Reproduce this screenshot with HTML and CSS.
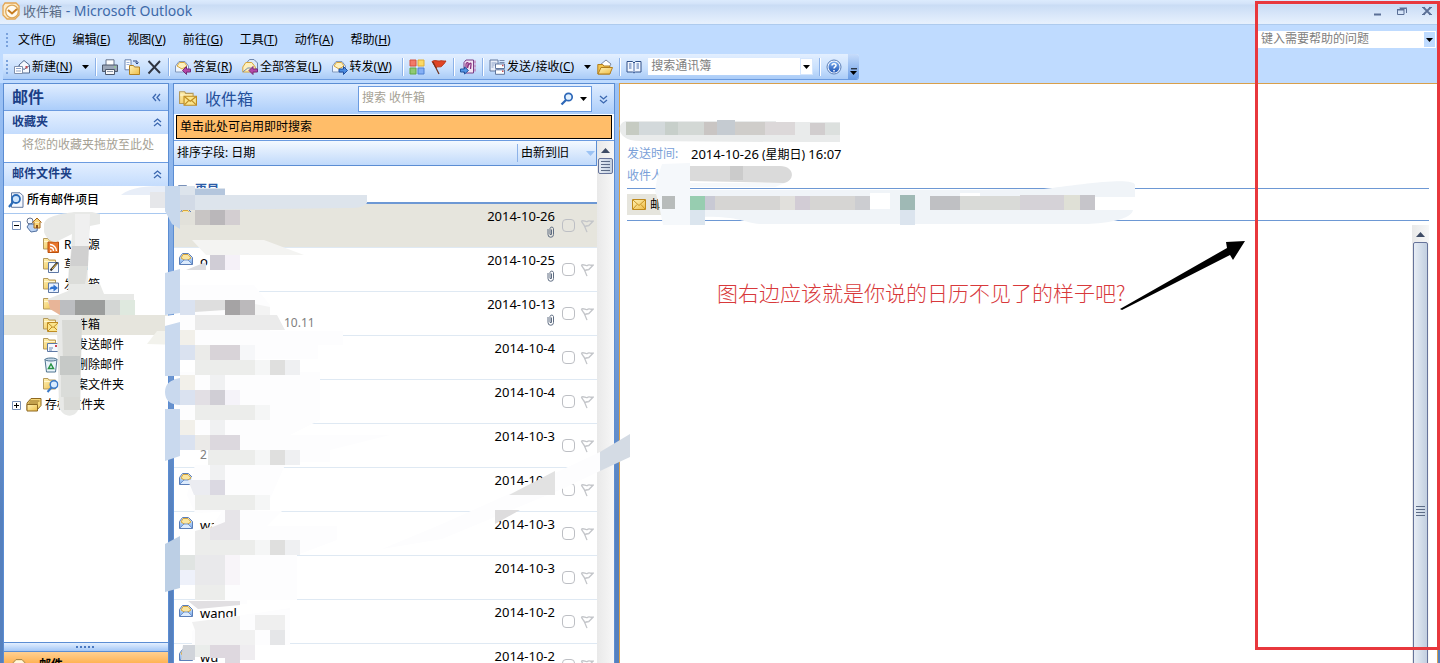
FILE: index.html
```html
<!DOCTYPE html>
<html lang="zh-CN">
<head>
<meta charset="utf-8">
<title>收件箱 - Microsoft Outlook</title>
<link rel="stylesheet" href="styles.css">
</head>
<body>
<svg class="defs" aria-hidden="true">
  <defs>
    <linearGradient id="gold" x1="0" y1="0" x2="1" y2="1"><stop offset="0" stop-color="#fff3b8"/><stop offset="1" stop-color="#eebc45"/></linearGradient>
    <linearGradient id="sky" x1="0" y1="0" x2="0" y2="1"><stop offset="0" stop-color="#f4f9ff"/><stop offset="1" stop-color="#6fa4e8"/></linearGradient>
    <linearGradient id="blueball" x1="0" y1="0" x2="0" y2="1"><stop offset="0" stop-color="#7fb0f0"/><stop offset="1" stop-color="#1f55b5"/></linearGradient>
  </defs>
  <symbol id="folder" viewBox="0 0 16 16"><path d="M.5 1.500h4.500l1 1.500h6.500v9H.5z" fill="url(#gold)" stroke="#b59a5c"/><path d="M1 4.500h11" stroke="#fff6cf"/></symbol>
  <symbol id="open-mail" viewBox="0 0 16 16"><path d="M1.500 6.500L4.500 2.500h6l4 4v7h-13z" fill="url(#sky)" stroke="#5c7fb8"/><path d="M3 7l2-3.500h5L13 7 8 10z" fill="#fbe6a0" stroke="#d7a63c"/><path d="M2 13l4-4h4l4 4" fill="#dcebfd" stroke="#7396cc"/></symbol>
  <symbol id="reply" viewBox="0 0 16 16"><path d="M.5 7L4 2.500h6L13.500 7v6H.5z" fill="#eef5fe" stroke="#8197bb"/><path d="M2 7l2.500-3.500h5L12 7 7 10z" fill="#fdf0bd" stroke="#d7a63c"/><path d="M7.500 11.500l4-4V10h4v3h-4v2.500z" fill="#b548a8" stroke="#762a78"/></symbol>
  <symbol id="flag" viewBox="0 0 16 16"><path d="M1.500 2.500c3-2 5 2 7.500 0 2-1 3 .5 6 0l-5 5-4 1M1.500 2.500l3 4.500 1 1.500 3-1M4.500 6.500L8 15" fill="none" stroke="#c3c5c9" stroke-width="1.500"/></symbol>
  <symbol id="clip" viewBox="0 0 8 12"><path d="M1 3v5.500a2.500 2.500 0 005.500 0V2.500a1.800 1.800 0 00-3.500 0v6h1.500V3.500" fill="none" stroke="#5f6d82"/></symbol>
  <symbol id="chev-up" viewBox="0 0 9 9"><path d="M1 4l3.500-3L8 4M1 8l3.500-3L8 8" fill="none" stroke="#3c68b0" stroke-width="1.300"/></symbol>
  <symbol id="caret" viewBox="0 0 7 4"><path d="M0 0h7L3.500 4z" fill="currentColor"/></symbol>
  <symbol id="env" viewBox="0 0 16 16"><path d="M1.500 2.500h13v10h-13z" fill="url(#gold)" stroke="#c08a1c"/><path d="M2 3l6 5.500L14 3M2 12l4-4.500M14 12l-4-4.500" fill="none" stroke="#c99425"/></symbol>
</svg>

<header class="titlebar">
  <svg class="logo" viewBox="0 0 18 18"><path d="M3 1h11l3 3v9l-4 4H5l-4-4V4z" fill="#fdebc8" stroke="#e3a552" stroke-width="1.300"/><circle cx="10" cy="9.500" r="6.300" fill="#fffaf0" stroke="#dba75a" stroke-width="1.300"/><path d="M6 8l4 3.500L15 7" fill="none" stroke="#c67d22" stroke-width="2"/></svg>
  <h1><span>收件箱</span> - Microsoft Outlook</h1>
  <div class="winbtns">
    <button aria-label="最小化"><svg viewBox="0 0 10 10"><path d="M2 8.500h7" stroke="#5a6f96" stroke-width="2"/></svg></button>
    <button aria-label="还原"><svg viewBox="0 0 10 10"><path d="M.5 4h6.500v4.500H.5zM3 2.500h6.500V7" fill="none" stroke="#5a6f96"/><path d="M0 3.500h7.500M2.500 2h7.500" stroke="#5a6f96"/></svg></button>
    <button aria-label="关闭"><svg viewBox="0 0 10 10"><path d="M1.500 1.500l7 7M8.500 1.500l-7 7" stroke="#5a6f96" stroke-width="1.800"/><path d="M0 1.500h3M7 1.500h3M0 8.500h3M7 8.500h3" stroke="#5a6f96"/></svg></button>
  </div>
</header>

<nav class="menubar">
  <span class="grip"></span>
  <button>文件(<u>F</u>)</button><button>编辑(<u>E</u>)</button><button>视图(<u>V</u>)</button><button>前往(<u>G</u>)</button><button>工具(<u>T</u>)</button><button>动作(<u>A</u>)</button><button>帮助(<u>H</u>)</button>
  <div class="askbox"><input type="text" aria-label="帮助" placeholder="键入需要帮助的问题"><button aria-label="展开"><svg class="caret"><use href="#caret"/></svg></button></div>
</nav>

<div class="toolrow">
<div class="toolbar">
  <span class="grip"></span>
  <button class="tb text"><svg class="ico" viewBox="0 0 16 16"><path d="M5 6l5-4.500L15.500 6v8H5z" fill="#f5f9ff" stroke="#51698f"/><path d="M5 6.500l5 4 5.500-4" fill="none" stroke="#51698f"/><path d="M.5 7.500h8v7h-8z" fill="#fff" stroke="#8090ac"/><path d="M2 9.500h5M2 12h5" stroke="#8fa5cc"/><path d="M11.500 7h2v2.500h-2z" fill="#c64f52"/></svg>新建(<u>N</u>)</button>
  <button class="tb drop" aria-label="新建选项"><svg class="caret"><use href="#caret"/></svg></button>
  <span class="sep"></span>
  <button class="tb" aria-label="打印"><svg class="ico" viewBox="0 0 16 16"><path d="M4 6V.8h8V6" fill="#fff" stroke="#66748c"/><path d="M.5 6h15v6.500H.5z" fill="#9ca7b8" stroke="#4d596d"/><path d="M3.500 10.500h9v5h-9z" fill="#f8f8f8" stroke="#4d596d"/><path d="M5 12.500h6" stroke="#8d97a8"/><path d="M12 8h2" stroke="#8fe07a"/></svg></button>
  <button class="tb" aria-label="移动"><svg class="ico" viewBox="0 0 16 16"><path d="M1 .8h6v10H1z" fill="#fff" stroke="#6a83ad"/><path d="M2.500 3.500h3M2.500 5.500h3" stroke="#9db2d6"/><path d="M9 2h4v3M11.500 3.500L13 5l1.500-1.500" fill="none" stroke="#2c4780"/><path d="M5.500 6.500h4l1 1.500h5v7.500h-10z" fill="url(#gold)" stroke="#b08023"/></svg></button>
  <button class="tb" aria-label="删除"><svg class="ico" viewBox="0 0 16 16"><path d="M2.500 2l11.500 12M14 2L2.500 14.500" stroke="#2f3440" stroke-width="1.900"/></svg></button>
  <span class="sep"></span>
  <button class="tb text"><svg class="ico"><use href="#reply"/></svg>答复(<u>R</u>)</button>
  <button class="tb text"><svg class="ico" viewBox="0 0 16 16"><path d="M4.500 4l3-3.500H12L15.500 4v6h-11z" fill="#dce9fa" stroke="#6e87ae"/><path d="M.8 8l3-4.500h6l3.500 4.500v5H.8z" fill="#fdf0bd" stroke="#d7a63c"/><path d="M.8 13l5-4h3" fill="none" stroke="#6e87ae"/><path d="M7 11.500l4-4V10h4.500v3H11v2.500z" fill="#b548a8" stroke="#762a78"/></svg>全部答复(<u>L</u>)</button>
  <button class="tb text"><svg class="ico" viewBox="0 0 16 16"><path d="M.5 7L4 2.500h6L13.500 7v6H.5z" fill="#eef5fe" stroke="#8197bb"/><path d="M2 7l2.500-3.500h5L12 7 7 10z" fill="#fdf0bd" stroke="#d7a63c"/><path d="M15.500 11.500l-4-4V10H7v3h4.500v2.500z" fill="#4d8ce0" stroke="#1f4fa0"/></svg>转发(<u>W</u>)</button>
  <span class="sep"></span>
  <button class="tb" aria-label="分类"><svg class="ico" viewBox="0 0 16 16"><path d="M1 1h6v6H1z" fill="#f27a68" stroke="#d4503f"/><path d="M9 1h6v6H9z" fill="#fbd966" stroke="#dfae35"/><path d="M1 9h6v6H1z" fill="#8fca72" stroke="#62a845"/><path d="M9 9h6v6H9z" fill="#84aff5" stroke="#4f80d3"/></svg></button>
  <button class="tb" aria-label="后续标志"><svg class="ico" viewBox="0 0 16 16"><path d="M1 2.500c3-2 5 0 8-.5 2-1 3 .5 6 0-2 3-3 4-4 5-2 2-4-.5-6 2z" fill="#e04424" stroke="#b8381d"/><path d="M2 3l6 12" stroke="#71331d" stroke-width="1.300"/></svg></button>
  <span class="sep"></span>
  <button class="tb" aria-label="发送到 OneNote"><svg class="ico" viewBox="0 0 16 16"><path d="M4 3.500L6 1h7.500v13H4z" fill="#f3e4f3" stroke="#7b3f87"/><path d="M6 10V5.500c0-2.500 3-2.500 2 0L7.500 9c1-5 4-6 3.500-3.500L10.500 10" fill="none" stroke="#8a2f80" stroke-width="1.300"/><path d="M15 1.500v12" stroke="#c05a9c" stroke-dasharray="3 1"/><path d="M.5 10h4V8l4 3.500-4 3.500v-2h-4z" fill="#5596e6" stroke="#23569f"/></svg></button>
  <span class="sep"></span>
  <button class="tb text"><svg class="ico" viewBox="0 0 16 16"><path d="M1 1h8v11H1z" fill="#e9eef8" stroke="#63789f"/><path d="M2.500 4h5M2.500 6h3M2.500 8h2" stroke="#8ba0c6"/><path d="M10.500 1.500h5M10.500 3.500h5" stroke="#7a8cae"/><path d="M6.500 5h9v4.500h-9zM6.500 10.800h9v4.500h-9z" fill="#fff" stroke="#61779e"/><path d="M13 6.500h1.500M13 12.300h1.500" stroke="#c64f52" stroke-width="1.500"/></svg>发送/接收(<u>C</u>)</button>
  <button class="tb drop" aria-label="发送接收选项"><svg class="caret"><use href="#caret"/></svg></button>
  <button class="tb" aria-label="查找"><svg class="ico" viewBox="0 0 16 16"><path d="M3 6l6-5 5 4-3 5z" fill="#fff" stroke="#7d8aa2"/><path d="M.8 5.500h5l1 1.500h6v8H.8z" fill="#f3c54e" stroke="#b27e1e"/><path d="M1 15l3-6.500h11.500L12.800 15z" fill="url(#gold)" stroke="#b27e1e"/></svg></button>
  <span class="sep"></span>
  <button class="tb" aria-label="通讯簿"><svg class="ico" viewBox="0 0 16 16"><path d="M1 2.500h5.500L8 4l1.500-1.500H15v10.500H9.500L8 14l-1.500-1H1z" fill="#f2f7ff" stroke="#2f4f88"/><path d="M8 4v10M3 5h2.500M3 7h2.500M3 9h2.500M10.500 5H13M10.500 7H13M10.500 9H13" stroke="#4c6fae"/></svg></button>
  <div class="finder"><input type="text" aria-label="搜索通讯簿" placeholder="搜索通讯簿"><button aria-label="展开"><svg class="caret"><use href="#caret"/></svg></button></div>
  <span class="sep"></span>
  <button class="tb" aria-label="帮助"><svg class="ico" viewBox="0 0 16 16"><circle cx="8" cy="8" r="7" fill="#f2f7ff" stroke="#5b7fb8"/><circle cx="8" cy="8" r="5.500" fill="url(#blueball)"/><path d="M6 6.500c0-2.500 4-2.500 4 0 0 1.500-2 1.300-2 3M8 11v1.500" fill="none" stroke="#fff" stroke-width="1.500"/></svg></button>
  <button class="overflow" aria-label="工具栏选项"><svg viewBox="0 0 7 8"><path d="M1 .8h6" stroke="#000"/><path d="M0 3h7L3.500 7z"/></svg></button>
</div>
</div>

<main class="panes">
  <aside class="nav">
    <div class="nav-title"><h2>邮件</h2><button aria-label="折叠"><svg class="chev" viewBox="0 0 9 9"><path d="M4 1L1 4.500 4 8M8 1L5 4.500 8 8" fill="none" stroke="#3c68b0" stroke-width="1.300"/></svg></button></div>
    <div class="nav-sec"><h3>收藏夹</h3><button aria-label="折叠"><svg class="chev"><use href="#chev-up"/></svg></button></div>
    <p class="fav">将您的收藏夹拖放至此处</p>
    <div class="nav-sec line"><h3>邮件文件夹</h3><button aria-label="折叠"><svg class="chev"><use href="#chev-up"/></svg></button></div>
    <button class="all"><svg class="ico" viewBox="0 0 16 16"><path d="M3.500.8H12l3 3v11.500H3.500z" fill="#f4f8ff" stroke="#60779f"/><circle cx="8" cy="7" r="4" fill="#cfe5fb" stroke="#2c6cb8" stroke-width="1.800"/><path d="M5 10l-4 5" stroke="#2c6cb8" stroke-width="2.200"/></svg>所有邮件项目</button>
    <ul class="tree">
      <li class="root"><svg class="tog" viewBox="0 0 9 9"><path d="M.5.5h8v8h-8z" fill="#fff" stroke="#7890b8"/><path d="M2 4.500h5" stroke="#000"/></svg><svg class="ico" viewBox="0 0 16 16"><circle cx="4" cy="4" r="3" fill="#f5f8ff" stroke="#62728e"/><path d="M3 7h9l-1 7-6 1-4-5z" fill="#bcd3f3" stroke="#51709f"/><path d="M6.500 5.500L11 1l4.500 4.500M8 5v6h6V5" fill="#f8d476" stroke="#a8681c"/><path d="M10 8h2v3h-2z" fill="#8c4f18"/></svg></li>
      <li><svg class="ico" viewBox="0 0 16 16"><use href="#folder"/><path d="M5 5h10.500v10.500H5z" fill="#e8762c" stroke="#b9510f"/><path d="M7 14h1.500M7 10.500c2 0 3.500 1.500 3.500 3.500M7 7.500c3.500 0 6.500 3 6.500 6.500" fill="none" stroke="#fff" stroke-width="1.400"/></svg>RSS 源</li>
      <li><svg class="ico" viewBox="0 0 16 16"><use href="#folder"/><path d="M5.500 5.500h10v10h-10z" fill="#f6faff" stroke="#5d78a5"/><path d="M7.500 13.500l7-8" stroke="#333" stroke-width="2"/><path d="M9 12l5-5.500" stroke="#f3bf45"/></svg>草稿</li>
      <li><svg class="ico" viewBox="0 0 16 16"><use href="#folder"/><path d="M5.500 6h10v9.500h-10z" fill="#e8f1ff" stroke="#5d78a5"/><path d="M6.500 13c0-3 2-3.500 4-3.500V7.500L15 11l-4.500 3.500V12c-2 0-3 0-4 1z" fill="#2f72cf"/></svg>发件箱</li>
      <li><svg class="ico"><use href="#folder"/></svg></li>
      <li class="sel"><svg class="ico" viewBox="0 0 16 16"><use href="#folder"/><path d="M4.500 5.500h11v9h-11z" fill="#fbe58c" stroke="#bf8c22"/><path d="M5 6l5 4.500L15 6M5 14l4-4M15 14l-4-4" fill="none" stroke="#bf8c22"/></svg>收件箱</li>
      <li><svg class="ico" viewBox="0 0 16 16"><use href="#folder"/><path d="M4.500 6.500h11v8h-11z" fill="#f5f9ff" stroke="#5d78a5"/><path d="M6 11h4M6 13h3" stroke="#6d88b5"/><path d="M12 8h2v2h-2z" fill="#c45"/></svg>已发送邮件</li>
      <li><svg class="ico" viewBox="0 0 16 16"><path d="M2 2.500h12L12.500 15h-9z" fill="#eaf4fb" stroke="#4f7490"/><ellipse cx="8" cy="2.500" rx="6" ry="1.500" fill="#c4d7e6" stroke="#4f7490"/><path d="M8 7l2.500 4.500h-5z" fill="none" stroke="#279345" stroke-width="1.500"/></svg>已删除邮件</li>
      <li><svg class="ico" viewBox="0 0 16 16"><use href="#folder"/><circle cx="11" cy="7.500" r="3.800" fill="#d8ebff" stroke="#3878c8" stroke-width="1.500"/><path d="M8.500 10.500l-4 4.500" stroke="#3878c8" stroke-width="2"/></svg>档案文件夹</li>
      <li class="root"><svg class="tog" viewBox="0 0 9 9"><path d="M.5.5h8v8h-8z" fill="#fff" stroke="#7890b8"/><path d="M2 4.500h5M4.500 2v5" stroke="#000"/></svg><svg class="ico" viewBox="0 0 16 16"><path d="M5 1.500h10v7L11 13H1V6z" fill="#f7d778" stroke="#8e6820"/><path d="M3.500 4h10M2.500 6h9.500" stroke="#8e6820"/><path d="M1 7.500h10.500V14H1z" fill="url(#gold)" stroke="#8e6820"/></svg>存档文件夹</li>
    </ul>
    <div class="splitter"><span></span></div>
    <button class="nav-mail"><svg class="bigico" viewBox="0 0 20 20"><path d="M1 9l6-6.500h6L19 9v10H1z" fill="#fbe9b8" stroke="#a9874a"/><path d="M3 9l4-5h6l4 5-7 5z" fill="#fff8e0"/></svg>邮件</button>
  </aside>

  <section class="list">
    <div class="list-head">
      <svg class="ico lg" viewBox="0 0 16 16"><use href="#folder"/><path d="M4.500 5.500h11v8h-11z" fill="#fbe58c" stroke="#bf8c22"/><path d="M5 6l5 4 5-4M5 13l4-4M15 13l-4-4" fill="none" stroke="#bf8c22"/></svg>
      <h2>收件箱</h2>
      <div class="search"><input type="search" aria-label="搜索" placeholder="搜索 收件箱"><button aria-label="搜索"><svg class="mag" viewBox="0 0 14 14"><circle cx="8.500" cy="5" r="3.700" fill="#e2f1ff" stroke="#2e68b8" stroke-width="1.700"/><path d="M6 8l-4.500 4.500" stroke="#2e68b8" stroke-width="2.300"/></svg></button><button aria-label="搜索选项"><svg class="caret"><use href="#caret"/></svg></button></div>
      <button aria-label="展开查询生成器"><svg class="chev" viewBox="0 0 9 9"><path d="M1 1l3.500 3L8 1M1 5l3.500 3L8 5" fill="none" stroke="#3c68b0" stroke-width="1.300"/></svg></button>
    </div>
    <button class="instant">单击此处可启用即时搜索</button>
    <div class="list-body">
      <div class="mails">
        <div class="sort"><button class="by">排序字段: 日期</button><button class="dir">由新到旧<svg class="tri" viewBox="0 0 9 5"><path d="M0 0h9L4.500 5z" fill="#9cc3f4"/></svg></button></div>
        <div class="group"><svg class="tog" viewBox="0 0 9 9"><path d="M.5.5h8v8h-8z" fill="#fff" stroke="#7890b8"/><path d="M2 4.500h5" stroke="#345"/></svg>更早</div>
        <ul class="rows">
          <li class="sel"><svg class="ico"><use href="#open-mail"/></svg><div class="who"></div><div class="when"><time>2014-10-26</time><svg class="clip"><use href="#clip"/></svg></div><input type="checkbox" aria-label="类别"><button aria-label="标志"><svg class="flag"><use href="#flag"/></svg></button></li>
          <li><svg class="ico"><use href="#open-mail"/></svg><div class="who">o</div><div class="when"><time>2014-10-25</time><svg class="clip"><use href="#clip"/></svg></div><input type="checkbox" aria-label="类别"><button aria-label="标志"><svg class="flag"><use href="#flag"/></svg></button></li>
          <li><span></span><div class="who"><br><small class="far">10.11</small></div><div class="when"><time>2014-10-13</time><svg class="clip"><use href="#clip"/></svg></div><input type="checkbox" aria-label="类别"><button aria-label="标志"><svg class="flag"><use href="#flag"/></svg></button></li>
          <li><span></span><div class="who"></div><div class="when"><time>2014-10-4</time></div><input type="checkbox" aria-label="类别"><button aria-label="标志"><svg class="flag"><use href="#flag"/></svg></button></li>
          <li><span></span><div class="who"></div><div class="when"><time>2014-10-4</time></div><input type="checkbox" aria-label="类别"><button aria-label="标志"><svg class="flag"><use href="#flag"/></svg></button></li>
          <li><span></span><div class="who"><br><small>2</small></div><div class="when"><time>2014-10-3</time></div><input type="checkbox" aria-label="类别"><button aria-label="标志"><svg class="flag"><use href="#flag"/></svg></button></li>
          <li><svg class="ico"><use href="#open-mail"/></svg><div class="who"></div><div class="when"><time>2014-10-3</time></div><input type="checkbox" aria-label="类别"><button aria-label="标志"><svg class="flag"><use href="#flag"/></svg></button></li>
          <li><svg class="ico"><use href="#open-mail"/></svg><div class="who">wa</div><div class="when"><time>2014-10-3</time></div><input type="checkbox" aria-label="类别"><button aria-label="标志"><svg class="flag"><use href="#flag"/></svg></button></li>
          <li><span></span><div class="who"></div><div class="when"><time>2014-10-3</time></div><input type="checkbox" aria-label="类别"><button aria-label="标志"><svg class="flag"><use href="#flag"/></svg></button></li>
          <li><svg class="ico"><use href="#open-mail"/></svg><div class="who">wangl</div><div class="when"><time>2014-10-2</time></div><input type="checkbox" aria-label="类别"><button aria-label="标志"><svg class="flag"><use href="#flag"/></svg></button></li>
          <li><svg class="ico"><use href="#open-mail"/></svg><div class="who">wu</div><div class="when"><time>2014-10-2</time></div><input type="checkbox" aria-label="类别"><button aria-label="标志"><svg class="flag"><use href="#flag"/></svg></button></li>
        </ul>
      </div>
      <div class="scroll"><svg class="up" viewBox="0 0 9 5"><path d="M0 5h9L4.500 0z" fill="#3f4c66"/></svg><div class="thumb small"><i></i></div></div>
    </div>
  </section>

  <article class="read">
    <div class="read-head">
      <dl><dt>发送时间:</dt><dd><time>2014-10-26</time> (星期日) <time>16:07</time></dd><dt>收件人:</dt><dd></dd></dl>
      <div class="attach"><button class="msg"><svg class="ico"><use href="#env"/></svg>邮件</button><span class="tab"></span><span class="tab"></span></div>
    </div>
    <div class="read-body"><div class="scroll"><svg class="up" viewBox="0 0 9 5"><path d="M0 5h9L4.500 0z" fill="#3f4c66"/></svg><div class="thumb tall"><i></i></div></div></div>
  </article>
</main>

<svg class="mosaic" width="1140" height="663" viewBox="0 0 1140 663" aria-hidden="true">
  <!-- folder tree -->
  <path d="M44 224c2-8 16-10 30-12h18l8 2v10l-10 2-3 20 1 38h12l4 10h30v21h-52l-2 10-1 82c-2 11-16 12-20 0l-2-77 2-15-5-8-6-4v-4l20-8 4-57-16 8c-6 0-10-4-12-10z" fill="#e8e9e7"/>
  <path d="M75 214h15l-1 32H75z" fill="#f0f0f0"/><path d="M72 246h17l-1 20H70z" fill="#d0d0d0"/><path d="M69 266h19l-3 18H68z" fill="#dcddda"/>
  <path d="M62 320h20l-2 90H64z" fill="#d8d9d5"/><path d="M60 356h20v19H60z" fill="#c6c9c7"/><path d="M61 375h19v22H61z" fill="#dadcd9"/>
  <path d="M48 300h12v15l-10-6z" fill="#e8b598"/><path d="M60 300h15v15H60z" fill="#bcbec1"/><path d="M75 300h30v15H75z" fill="#9b9d9c"/><path d="M105 300h15v15h-15z" fill="#d3d6d4"/><path d="M120 300h15v15h-15z" fill="#dfe9df"/>
  <path d="M147 344l10-13h23v14z" fill="#f2f2ec"/><path d="M165 316l30-4v16l-30 2z" fill="#fff"/>
  <path d="M121 195c10-8 25-9 44-9v9z" fill="#e8eef8"/><path d="M150 192h15v16h-15z" fill="#e6e7ea"/>
  <!-- first message -->
  <path d="M165 186h30v2h30v7h142v8c-4 5-12 5-20 5l-150 2H180v18l-6-5-9-12z" fill="#dde4ec"/>
  <path d="M165 186h15v43l-8-5-7-13z" fill="#c8d8ec"/><path d="M195 189h30v6h-30z" fill="#b4c6dd"/>
  <path d="M180 195h15v15h-15z" fill="#d2dae6"/><path d="M195 210h15v15h-15z" fill="#c8c5c4"/><path d="M210 210h15v15h-15z" fill="#bab7ba"/><path d="M225 210h15v15h-15z" fill="#d3ced1"/><path d="M180 212h15v13h-15z" fill="#e2e1da"/>
  <path d="M192 240h72l40 15h-98z" fill="#f4f4f2"/>
  <!-- gutter -->
  <g fill="#c9d9ee"><path d="M165 273l15-4v44l-15 2zM165 326l15-4v54H165zM180 378c-10 2-15 6-15 14s5 13 15 13zM165 409h15v47l-15 5z"/><path d="M165 544l15-8v52l-15 4z" fill="#bccfe5"/></g>
  <!-- senders and subjects -->
  <g fill="#fdfdfe"><path d="M180 285h74l16 20v26h73v14h-25v14h-138zM180 372h140v48l-30 15h100l-60 15v12H210l-2-13-8-15h-20zM195 465h90l-20 45-70 3-8-18zM222 511h60l-15 15h70v14l-40 15v45h-50v4h-40v-70zM210 620l80-12v37h-98v-14z"/></g>
  <path d="M210 255h15v15h-15z" fill="#d0cdd6"/><path d="M225 255h15v15h-15z" fill="#f5f1f8"/><path d="M206 262v8h-20z" fill="#dcdcdf"/>
  <path d="M180 300h15v15h-15zM180 345h15v15h-15zM180 390h15v15h-15zM180 435h15v15h-15z" fill="#dae2f0"/>
  <path d="M180 330h15v15h-15zM180 375h15v15h-15zM180 420h15v15h-15z" fill="#f2f0ea"/>
  <path d="M195 300h30v10l-30 2z" fill="#dedede"/><path d="M225 300h15v15h-15z" fill="#a5a3a4"/><path d="M240 300h15v15h-15z" fill="#bbb9bb"/><path d="M255 304l15 3v8h-15z" fill="#f3f3f3"/>
  <path d="M195 315h82l8 15h-90z" fill="#ebebeb"/>
  <path d="M195 345h15v15h-15z" fill="#ebebe9"/><path d="M210 345h30v15h-30z" fill="#d8d3d8"/><path d="M240 345h15v15h-15z" fill="#f6f7f9"/>
  <path d="M195 360h60v15h-60zM195 405h60v15h-60zM208 450h47v15h-47zM195 495h60v15h-60zM195 540h60v15h-60zM195 585h30v15h-30z" fill="#ecedeb"/>
  <path d="M270 360h15v15h-15zM270 450h15v15h-15zM270 540h15v15h-15z" fill="#dfdfde"/><path d="M285 360h15v15h-15zM285 450h15v15h-15zM285 540h15v15h-15z" fill="#eff0f2"/>
  <path d="M255 360h15v15h-15zM255 405h15v15h-15zM255 450h15v15h-15zM255 495h15v15h-15zM255 540h15v15h-15z" fill="#f5f6f6"/>
  <path d="M195 390h15v15h-15z" fill="#e2dfe4"/><path d="M210 390h15v15h-15z" fill="#d0ced5"/><path d="M225 390h15v15h-15z" fill="#f5f3f9"/>
  <path d="M210 375h15v15h-15zM210 420h15v15h-15zM210 465h15v15h-15z" fill="#f0f1f2"/><path d="M195 435h15v15h-15z" fill="#ebeae8"/><path d="M210 435h30v15h-30z" fill="#dcd8de"/>
  <path d="M188 480h22v15h-16z" fill="#ebecf1"/><path d="M210 480h15v15h-15z" fill="#dbd9e2"/>
  <path d="M225 510h15v30h-30v-12l15-6z" fill="#e6e4e8"/><path d="M195 531l15-4v13h-15z" fill="#ececec"/>
  <path d="M180 555h15v15h-15z" fill="#e0e4e2"/><path d="M180 570h15v15h-15z" fill="#eef1fa"/><path d="M195 555h30v30h-30z" fill="#e9e9eb"/><path d="M225 555h15v30h-15z" fill="#f8f5f9"/>
  <path d="M188 601h52v4l-42 4z" fill="#e1dfe2"/><path d="M192 622l48-6v14h-45z" fill="#f0f0f0"/><path d="M195 630h60v15h-60z" fill="#f1f1f1"/><path d="M255 615h30v15h-30z" fill="#efefef"/><path d="M270 630h15v15h-15z" fill="#e5e6e8"/>
  <path d="M183 645h12v15h-14z" fill="#d0d4da"/><path d="M195 645h15v12h-15z" fill="#eaedeb"/><path d="M210 645h30v18h-15v-5h-15z" fill="#ded8df"/><path d="M240 645h15v15h-15z" fill="#efedf0"/>
  <!-- diagonal stroke -->
  <path d="M540 480l60-28v19l-38 18-120 50-60 10 60-25z" fill="#fdfdfe"/><path d="M509 495l46-24v24z" fill="#e2e2e2"/><path d="M495 510h25l-25 14z" fill="#dddcdd"/><path d="M600 452l30-18v23l-30 14z" fill="#d4dbe4"/>
  <!-- reading pane -->
  <path d="M626 121h150v1h64v20h-60l-140-1c-24 0-24-18-14-20z" fill="#e9ebeb"/>
  <path d="M626 122h13v13h-13z" fill="#c6cbc2"/><path d="M639 122h26v13h-26z" fill="#d3d9db"/><path d="M665 122h13v13h-13z" fill="#c7cfca"/><path d="M678 122h26v13h-26z" fill="#d3d8d5"/><path d="M704 122h13v13h-13z" fill="#c9c5c3"/><path d="M717 120h18v15h-18z" fill="#c5cbd1"/><path d="M735 122h30v13h-30z" fill="#cfcdca"/><path d="M765 122h30v13h-30z" fill="#dcd8d9"/><path d="M810 123h15v12h-15z" fill="#d1cdce"/><path d="M825 123h15v12h-15z" fill="#dce0de"/>
  <path d="M662 164l28-1v20h95l-10 4H690v38h-27l-5-25-3-9 2-12z" fill="#f5f8fb"/>
  <path d="M690 166h90c14 0 16 14 4 17l-94-2z" fill="#dadada"/><path d="M730 166h13v14h-13z" fill="#cbcbcb"/>
  <path d="M662 196h13v13h-13z" fill="#b8bcbb"/>
  <path d="M690 190h284l70-1c30-4 91-13 91-4v12h-40v13h38c-2 12-40 14-50 14H760c-20-2-20-9-70-7z" fill="#f0f4f8"/>
  <path d="M870 193h20v16h-20zM960 193h20v3h-20z" fill="#fff"/>
  <path d="M690 196h15v14h-15z" fill="#97cdb0"/><path d="M705 196h10v14h-10z" fill="#c8c9d4"/><path d="M715 196h140v14H715z" fill="#d6d5d3"/><path d="M780 196h15v14h-15z" fill="#e1e0dc"/><path d="M795 196h15v14h-15z" fill="#d2ccd5"/><path d="M855 196h15v14h-15z" fill="#cccdd1"/>
  <path d="M900 195h15v15h-15z" fill="#9fb9b5"/><path d="M900 210h15v15h-15z" fill="#dbe4ee"/><path d="M690 210h15v15h-15z" fill="#dbe5ee"/><path d="M930 196h30v14h-30z" fill="#bfc0c3"/><path d="M960 196h60v14h-60z" fill="#d9dad7"/><path d="M1020 195h60v15h-60z" fill="#d5d2d7"/><path d="M1064 195h16v15h-16z" fill="#dfe0d6"/><path d="M1080 195h15v15h-15z" fill="#c6c5ca"/>
</svg>

<p class="note">图右边应该就是你说的日历不见了的样子吧?</p>
<svg class="arrow" width="126" height="72" viewBox="0 0 126 72" aria-hidden="true"><path d="M0 69L107 8l-1-6 19-1-12 19-3-5L2 70z" fill="#000"/></svg>
<div class="frame"></div>
</body>
</html>
```
FILE: styles.css
```css
* { box-sizing: border-box; }
body {
  margin: 0;
  height: 100vh;
  overflow: hidden;
  position: relative;
  display: flex;
  flex-direction: column;
  background: #bfdbff;
  color: #000;
  font: 12px/16px "Noto Sans", "Noto Sans CJK SC", sans-serif;
}
button, input { font: inherit; color: inherit; }
button { border: 0; padding: 0; background: none; display: flex; align-items: center; white-space: nowrap; }
u { text-underline-offset: 1px; }
h1, h2, h3, p, ul, dl, dd { margin: 0; padding: 0; list-style: none; }
svg { display: block; flex: none; }
.defs { position: absolute; width: 0; height: 0; }
.ico { width: 16px; height: 16px; }
.caret { width: 7px; height: 4px; }
.chev, .tog { width: 9px; height: 9px; }
input::placeholder { color: #808080; opacity: 1; }

.titlebar {
  flex: none;
  height: 25px;
  display: flex;
  align-items: center;
  gap: 2px;
  padding: 0 8px 2px 2px;
  background: linear-gradient(#dcebfd 0, #d3e3f9 4px, #c9dcf5 5px, #e6f0fd 23px);
  border-bottom: 1px solid #aecbee;
}
.logo { width: 18px; height: 18px; }
.titlebar h1 { flex: 1; padding-left: 1px; font-size: 14px; font-weight: 400; color: #3e6aaa; }
.titlebar h1 span { font-size: 13px; color: #5a6c86; }
.winbtns { display: flex; gap: 15px; }
.winbtns svg { width: 10px; height: 10px; }

.menubar { flex: none; height: 29px; display: flex; align-items: center; gap: 17px; padding: 0 4px 0 6px; }
.grip { width: 2px; height: 14px; flex: none; background: repeating-linear-gradient(#7aa2dc 0 2px, transparent 2px 4px); }
.menubar .grip { margin-right: -7px; }
.askbox { margin-left: auto; width: 178px; height: 17px; display: flex; background: #fff; }
.askbox input, .finder input, .search input { flex: 1; min-width: 0; border: 0; outline: 0; padding: 0 3px 2px; background: none; }
.askbox button { width: 12px; justify-content: center; background: #bfdbff; border: 1px solid #fff; border-left: 0; }

.toolrow { flex: none; height: 29px; padding-left: 3px; display: flex; align-items: flex-start; }
.toolbar {
  height: 26px;
  display: flex;
  align-items: center;
  gap: 6px;
  padding-left: 3px;
  border-bottom: 1px solid #6b9be0;
  border-radius: 0 3px 3px 0;
  background: linear-gradient(#e3efff, #c7dffd 60%, #a9cbf7);
}
.tb.text { gap: 0; padding-right: 4px; }
.tb.text .ico { margin-right: 2px; }
.sep { width: 1px; height: 18px; background: #8db2e8; box-shadow: 1px 0 #fff; }
.finder { width: 165px; height: 17px; display: flex; background: #fff; }
.finder button { width: 13px; justify-content: center; border: 1px solid #d5e6fd; }
.overflow { width: 11px; height: 25px; align-items: flex-end; justify-content: center; padding-bottom: 3px; border-radius: 0 3px 3px 0; background: linear-gradient(#c6dcfb, #6d9fe6); }
.overflow svg { width: 7px; height: 8px; }

.panes {
  flex: 1;
  min-height: 0;
  display: grid;
  grid-template-columns: 166px 442px minmax(0, 1fr);
  gap: 4px;
  padding: 0 2px 0 3px;
  background: linear-gradient(#9cc3f7, #5580be 75%);
}
.nav, .list { display: flex; flex-direction: column; min-height: 0; overflow: hidden; background: #fff; border: 1px solid #5b8dd3; border-bottom: 0; }
.nav h2, .nav h3 { flex: 1; color: #1b3f86; font-weight: 700; }
.nav-title { height: 27px; flex: none; display: flex; align-items: center; padding: 0 7px 0 8px; background: linear-gradient(#e0edff, #abcdfa); border-bottom: 1px solid #6b9be0; }
.nav-title h2 { font-size: 16px; line-height: 24px; }
.nav-sec { height: 23px; flex: none; display: flex; align-items: center; padding: 0 6px 1px 8px; background: linear-gradient(#e3efff, #c4dcfd); }
.nav-sec.line { border-top: 1px solid #6b9be0; height: 24px; }
.nav-sec h3 { font-size: 12px; }
.fav { height: 28px; flex: none; padding: 2px 0 0 18px; color: #a5a194; line-height: 18px; white-space: nowrap; }
.all { height: 28px; flex: none; gap: 3px; padding-left: 4px; font-weight: 500; border-bottom: 1px solid #a8c8f0; }
.tree { flex: 1; min-height: 0; padding-top: 1px; overflow: hidden; }
.tree li { height: 20px; display: flex; align-items: center; gap: 5px; padding-left: 39px; white-space: nowrap; }
.tree li.root { padding-left: 8px; }
.tree li.root .ico { margin-right: -2px; }
.tree li.sel { background: #e6e5dd; }
.splitter { height: 9px; flex: none; display: flex; align-items: center; justify-content: center; background: linear-gradient(#e3efff, #a4c7f6); border-top: 1px solid #5b8dd3; }
.splitter span { width: 20px; height: 2px; background: repeating-linear-gradient(90deg, #4a78c0 0 2px, transparent 2px 4px); }
.nav-mail { flex: none; height: 12px; overflow: hidden; align-items: flex-start; gap: 10px; padding: 5px 0 0 5px; font-weight: 700; background: linear-gradient(#ffd092, #ffb354); border-top: 1px solid #5b8dd3; }
.bigico { width: 20px; height: 20px; }

.list-head { height: 30px; flex: none; display: flex; align-items: center; padding-left: 5px; background: linear-gradient(#e0edff, #abcdfa); }
.ico.lg { width: 18px; height: 18px; }
.list-head h2 { flex: 1; padding-left: 8px; font-size: 16px; font-weight: 400; color: #24509c; }
.search { width: 234px; height: 26px; display: flex; align-items: center; gap: 6px; padding-right: 4px; background: #fff; border: 1px solid #6b9be0; }
.search input::placeholder { color: #a5a194; }
.mag { width: 14px; height: 14px; }
.list-head > button { width: 22px; justify-content: center; }
.instant { flex: none; height: 24px; margin: 1px 2px; padding-left: 3px; border: 1px solid #000; background: #ffbd69; }
.list-body { flex: 1; min-height: 0; display: flex; border-top: 1px solid #6b9be0; }
.mails { flex: 1; min-width: 0; overflow: hidden; }
.sort { height: 25px; display: flex; justify-content: space-between; background: linear-gradient(#f4f9ff, #c1dafb); border-bottom: 1px solid #5b8dd3; border-right: 1px solid #5b8dd3; }
.by { padding-left: 3px; }
.dir { width: 79px; margin: 3px 0; padding: 0 1px 0 3px; justify-content: space-between; border-left: 1px solid #8db2e8; }
.tri { width: 9px; height: 5px; }
.group { height: 38px; display: flex; align-items: flex-end; gap: 8px; padding: 0 0 4px 4px; color: #2c5ca8; font-weight: 700; border-bottom: 2px solid #6d98d4; }
.group .tog { margin-bottom: 4px; }
.rows li {
  height: 44px;
  display: grid;
  grid-template-columns: 16px 1fr 70px 13px 14px;
  column-gap: 5px;
  align-items: center;
  padding: 0 3px 0 4px;
  border-bottom: 1px solid #dfe9f3;
}
.rows li > .ico { align-self: start; margin-top: 3px; }
.rows li.sel { background: #e6e5dd; }
.who { align-self: start; margin: 5px 0 0 1px; font-size: 13px; }
.who small { font-size: 12px; line-height: 20px; color: #808080; }
.who .far { padding-left: 84px; }
.when { align-self: start; display: flex; flex-direction: column; align-items: flex-end; gap: 2px; padding: 4px 2px 0 0; }
time { font-size: 13px; line-height: 16px; }
.clip { width: 8px; height: 12px; }
.rows input { appearance: none; margin: 0; width: 13px; height: 13px; border: 1px solid #bdbfc4; border-radius: 4px; justify-self: end; }
.flag { width: 14px; height: 14px; }
.scroll { width: 17px; flex: none; display: flex; flex-direction: column; align-items: center; background: linear-gradient(90deg, #e9e9e9, #f7f7f7); }
.up { width: 9px; height: 5px; margin: 7px 0 5px; }
.thumb { width: 15px; display: flex; align-items: center; justify-content: center; border: 1px solid #66739a; border-radius: 2px; background: linear-gradient(90deg, #e7edf5, #c2cfe0); }
.thumb i { width: 9px; height: 10px; background: repeating-linear-gradient(#5c6b86 0 1px, transparent 1px 3px); }
.thumb.small { height: 16px; }
.thumb.tall { flex: none; height: calc(100% + 100px); }

.read { display: flex; flex-direction: column; min-height: 0; overflow: hidden; background: #fff; border: 1px solid #d99f4a; border-bottom: 0; }
.read-head { flex: none; padding: 59px 8px 0 7px; }
.read dl { display: grid; grid-template-columns: 64px 1fr; grid-auto-rows: 22px; align-items: center; padding-bottom: 1px; border-bottom: 1px solid #6d98d4; }
.read dt { color: #7a9fd8; }
.attach { height: 32px; display: flex; align-items: center; gap: 3px; border-bottom: 1px solid #6d98d4; }
.msg { height: 21px; width: 48px; padding-left: 4px; gap: 3px; background: #e6e5dd; overflow: hidden; }
.tab { height: 21px; width: 178px; border: 1px solid #e6e5dd; }
.read-body { flex: 1; min-height: 0; display: flex; justify-content: flex-end; padding: 4px 8px 0 0; }

.mosaic { position: absolute; left: 0; top: 0; pointer-events: none; }
.note { position: absolute; left: 717px; top: 278px; color: #d8393b; font: 300 21px/28px "Noto Sans CJK SC", sans-serif; white-space: nowrap; }
.arrow { position: absolute; left: 1120px; top: 240px; }
.frame { position: absolute; right: 0; top: 1px; width: 185px; height: 649px; border: 3px solid #e8383d; pointer-events: none; }
```
